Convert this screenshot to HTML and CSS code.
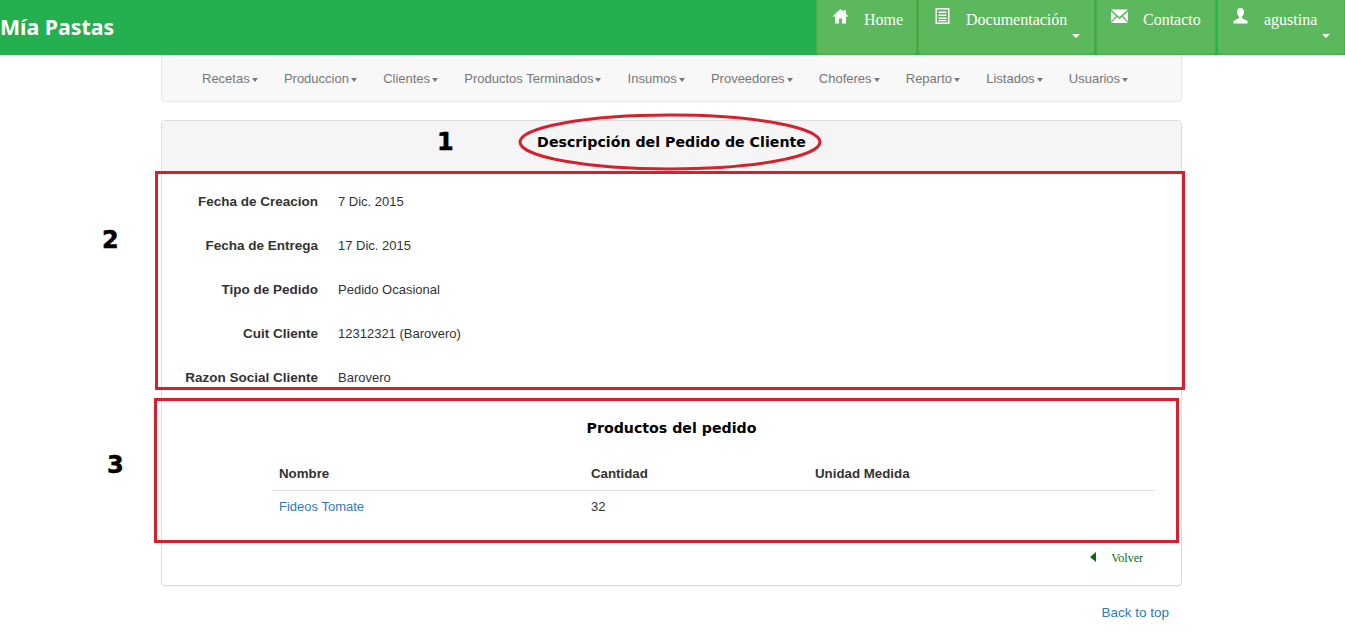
FILE: index.html
```html
<!DOCTYPE html>
<html lang="es">
<head>
    <meta charset="UTF-8">
    <title>Mía Pastas</title>
    <link rel="stylesheet" href="styles.css">
</head>
<body>
    <header class="topbar">
        <a class="brand" href="#">Mía Pastas</a>
        <nav class="topnav">
            <a class="topitem item-home" href="#">
                <svg class="ticon" viewBox="0 0 16 16"><path d="M8 1 0 8.500H2.500V15.500H6.500V10.500H9.500V15.500H13.500V8.500H16L13.500 6.100V2H11V3.800z"/></svg>
                <span>Home</span>
            </a>
            <a class="topitem item-doc" href="#">
                <svg class="ticon" viewBox="0 0 16 16"><path fill-rule="evenodd" d="M1 0h14v16H1zM2.500 1.500v13h11v-13zM4 3.500h8v1.500H4zM4 6.500h8V8H4zM4 9.500h8V11H4zM4 12h8v1.200H4z"/></svg>
                <span>Documentación</span>
                <i class="tcaret"></i>
            </a>
            <a class="topitem item-contact" href="#">
                <svg class="ticon" viewBox="0 0 17 16"><path d="M0 1.500h17L8.500 9zM0 3.500v10l5-5.500zM17 3.500v10l-5-5.500zM0 15l6-6 2.500 2 2.500-2 6 6z"/></svg>
                <span>Contacto</span>
            </a>
            <a class="topitem item-user" href="#">
                <svg class="ticon" viewBox="0 0 16 16"><path d="M8 0c2.300 0 3.500 1.700 3.500 4 0 2-1 3.600-2 4.500v1.500l5.500 3v2.500H1V13l5.500-3V8.500c-1-.9-2-2.500-2-4.500 0-2.300 1.200-4 3.500-4z"/></svg>
                <span>agustina</span>
                <i class="tcaret"></i>
            </a>
        </nav>
    </header>

    <div class="wrap">
        <nav class="subnav">
            <a href="#">Recetas<i class="caret"></i></a>
            <a href="#">Produccion<i class="caret"></i></a>
            <a href="#">Clientes<i class="caret"></i></a>
            <a href="#">Productos Terminados<i class="caret"></i></a>
            <a href="#">Insumos<i class="caret"></i></a>
            <a href="#">Proveedores<i class="caret"></i></a>
            <a href="#">Choferes<i class="caret"></i></a>
            <a href="#">Reparto<i class="caret"></i></a>
            <a href="#">Listados<i class="caret"></i></a>
            <a href="#">Usuarios<i class="caret"></i></a>
        </nav>

        <section class="panel">
            <h1 class="panel-title">Descripción del Pedido de Cliente</h1>
            <dl class="details">
                <dt>Fecha de Creacion</dt><dd>7 Dic. 2015</dd>
                <dt>Fecha de Entrega</dt><dd>17 Dic. 2015</dd>
                <dt>Tipo de Pedido</dt><dd>Pedido Ocasional</dd>
                <dt>Cuit Cliente</dt><dd>12312321 (Barovero)</dd>
                <dt>Razon Social Cliente</dt><dd>Barovero</dd>
            </dl>
            <h2 class="products-title">Productos del pedido</h2>
            <div class="products">
                <div class="prow phead">
                    <span>Nombre</span><span>Cantidad</span><span>Unidad Medida</span>
                </div>
                <div class="prow">
                    <a href="#">Fideos Tomate</a><span>32</span><span></span>
                </div>
            </div>
            <div class="back-row">
                <a class="volver" href="#"><i class="arrow"></i>Volver</a>
            </div>
        </section>

        <div class="to-top"><a href="#">Back to top</a></div>
    </div>

    <!-- Marcas rojas sobre la captura -->
    <svg class="marks" width="1345" height="633" viewBox="0 0 1345 633">
        <ellipse cx="670" cy="142" rx="150" ry="27" fill="none" stroke="#d4212e" stroke-width="3"/>
        <rect x="156.500" y="172.500" width="1027" height="216" fill="none" stroke="#d4212e" stroke-width="3"/>
        <rect x="155.500" y="399.500" width="1022" height="142" fill="none" stroke="#d4212e" stroke-width="3"/>
    </svg>
    <span class="num num-1">1</span>
    <span class="num num-2">2</span>
    <span class="num num-3">3</span>
</body>
</html>
```

FILE: styles.css
```css
html, body {
    margin: 0;
    padding: 0;
    height: 633px;
    overflow: hidden;
}
body {
    position: relative;
    background: #fff;
    font-family: 'Liberation Sans', Arial, sans-serif;
    font-size: 13px;
    color: #333;
}
a {
    text-decoration: none;
}
.topbar {
    height: 55px;
    background: #24b04f;
    display: flex;
    justify-content: space-between;
}
.brand {
    font-family: 'Noto Sans', sans-serif;
    font-weight: 700;
    font-size: 21.300px;
    line-height: 54px;
    color: #fff;
}
.topnav {
    display: flex;
    gap: 1px;
}
.topitem {
    position: relative;
    box-sizing: border-box;
    height: 55px;
    display: flex;
    align-items: flex-start;
    background: #5cb85c;
    border: 1px solid #4cae4c;
    border-top: none;
    border-radius: 0 0 4px 4px;
    color: #fff;
    font-family: 'Liberation Serif', serif;
    font-size: 16px;
    line-height: 40px;
}
.item-home { width: 101px; padding-left: 15px; }
.item-doc { width: 177px; padding-left: 15px; }
.item-contact { width: 120px; padding-left: 14px; }
.item-user { width: 128px; padding-left: 14px; }
.ticon {
    width: 17px;
    height: 16px;
    margin-top: 8px;
    margin-right: 15px;
    fill: #fff;
}
.tcaret {
    position: absolute;
    right: 14px;
    top: 34px;
    border-top: 4px solid #fff;
    border-left: 4px solid transparent;
    border-right: 4px solid transparent;
}
.wrap {
    margin: 0 163px 0 161px;
}
.subnav {
    box-sizing: border-box;
    height: 47px;
    display: flex;
    padding-left: 40px;
    gap: 26.200px;
    background: #f8f8f8;
    border: 1px solid #e7e7e7;
    border-top: none;
    border-radius: 0 0 4px 4px;
}
.subnav a {
    line-height: 47px;
    color: #777;
    font-size: 13px;
}
.caret {
    display: inline-block;
    margin-left: 2px;
    vertical-align: middle;
    border-top: 4px solid #777;
    border-left: 3px solid transparent;
    border-right: 3px solid transparent;
}
.panel {
    box-sizing: border-box;
    height: 466px;
    margin-top: 18px;
    background: #fff;
    border: 1px solid #ddd;
    border-radius: 4px;
    box-shadow: 0 1px 1px rgba(0,0,0,0.05);
}
.panel-title {
    margin: 0;
    height: 50px;
    background: #f5f5f5;
    border-radius: 3px 3px 0 0;
    text-align: center;
    font-family: 'DejaVu Sans', sans-serif;
    font-size: 14.200px;
    line-height: 42px;
    color: #000;
}
.details {
    display: grid;
    grid-template-columns: 156px 1fr;
    column-gap: 20px;
    row-gap: 26px;
    margin: 22px 0 0;
    line-height: 18px;
}
.details dt {
    font-weight: 700;
    font-size: 13.500px;
    text-align: right;
}
.details dd {
    margin: 0;
}
.products-title {
    margin: 30px 0 0;
    text-align: center;
    font-family: 'DejaVu Sans', sans-serif;
    font-size: 14.200px;
    line-height: 22px;
    color: #000;
}
.products {
    margin: 19px 27px 0 110px;
}
.prow {
    display: grid;
    grid-template-columns: 312px 224px 1fr;
    padding: 0 7px;
    line-height: 32px;
}
.prow a {
    color: #337ab7;
}
.phead {
    font-weight: 700;
    font-size: 13.300px;
    border-bottom: 1px solid #ddd;
}
.back-row {
    display: flex;
    justify-content: flex-end;
    padding-right: 38px;
    margin-top: 28px;
}
.volver {
    display: flex;
    align-items: center;
    font-family: 'Liberation Serif', serif;
    font-size: 12px;
    color: #0a6b0a;
}
.arrow {
    margin-right: 15px;
    margin-top: -3px;
    border-right: 6px solid #0a6b0a;
    border-top: 5px solid transparent;
    border-bottom: 5px solid transparent;
}
.to-top {
    margin-top: 19px;
    text-align: right;
    padding-right: 13px;
    font-size: 13.500px;
}
.to-top a {
    color: #337ab7;
}
.marks {
    position: absolute;
    left: 0;
    top: 0;
    pointer-events: none;
}
.num {
    position: absolute;
    font-family: 'DejaVu Sans', sans-serif;
    font-weight: 700;
    font-size: 24px;
    line-height: 28px;
    color: #000;
    -webkit-text-stroke: 0.5px #000;
}
.num-1 { left: 437px; top: 128px; }
.num-2 { left: 102px; top: 226px; }
.num-3 { left: 107px; top: 451px; }
```
